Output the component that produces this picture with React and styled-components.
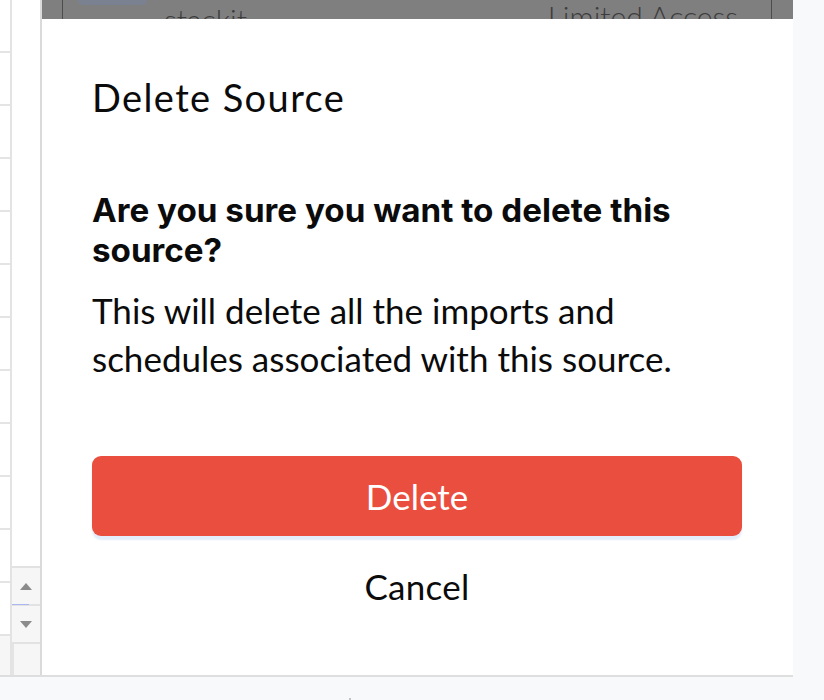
import React from 'react'
import styled, { createGlobalStyle } from 'styled-components'

const Global = createGlobalStyle`
      * {
            box-sizing: border-box;
      }

      body {
            margin: 0;
            background: #f8f9fb;
            font-family: Lato, "Noto Sans", sans-serif;
      }
`

const App = () => {
      const heads = Array.from({ length: 12 })

      return (
            <>
                  <Global />
                  <Page>
                        <Workspace>
                              <Body>
                                    <Sidebar>
                                          <RowHeads>
                                                {heads.map((_, i) => <HeadCell key={i} />)}
                                                <HeadCell $shade $last />
                                          </RowHeads>
                                          <Rail>
                                                <Stepper>
                                                      <StepButton $marked>
                                                            <Arrow dir='up' />
                                                      </StepButton>
                                                      <StepButton>
                                                            <Arrow dir='down' />
                                                      </StepButton>
                                                </Stepper>
                                                <RailTail />
                                          </Rail>
                                    </Sidebar>
                                    <Main>
                                          <Backdrop>
                                                <BehindCard>
                                                      <Chip />
                                                      <BehindName>stackit</BehindName>
                                                      <BehindAccess>Limited Access</BehindAccess>
                                                </BehindCard>
                                          </Backdrop>
                                          <DeleteSheet
                                                title='Delete Source'
                                                question='Are you sure you want to delete this source?'
                                                detail='This will delete all the imports and schedules associated with this source.'
                                          />
                                    </Main>
                              </Body>
                              <Rule />
                              <Footer>
                                    <Dot />
                              </Footer>
                        </Workspace>
                  </Page>
            </>
      )
}

export default App

const DeleteSheet = ({ title, question, detail }) => {

      return (
            <Sheet>
                  <Title>{title}</Title>
                  <Question>{question}</Question>
                  <Detail>{detail}</Detail>
                  <DangerButton>Delete</DangerButton>
                  <GhostButton>Cancel</GhostButton>
            </Sheet>
      )
}

const Arrow = ({ dir }) => (
      <svg width='12' height='7' viewBox='0 0 12 7'>
            {dir === 'up'
                  ? <polygon points='6,0 12,7 0,7' fill='#8b8b8b' />
                  : <polygon points='0,0 12,0 6,7' fill='#8b8b8b' />}
      </svg>
)

const Page = styled.div`
      display: flex;
      width: 824px;
      height: 700px;
      overflow: hidden;
      background: #f8f9fb;
`

const Workspace = styled.div`
      width: 793px;
      display: flex;
      flex-direction: column;
`

const Body = styled.div`
      display: flex;
      height: 675px;
      background: #fff;
`

const Sidebar = styled.div`
      display: flex;
      width: 42px;
      flex-shrink: 0;
`

const RowHeads = styled.div`
      width: 12px;
      display: flex;
      flex-direction: column;
      border-right: 2px solid #e3e3e3;
`

const HeadCell = styled.div`
      height: ${({ $last }) => $last ? 'auto' : '53px'};
      flex: ${({ $last }) => $last ? '1' : '0 0 auto'};
      border-bottom: ${({ $last }) => $last ? 'none' : '2px solid #e4e4e4'};
      background: ${({ $shade }) => $shade ? '#f6f6f6' : '#fff'};
`

const Rail = styled.div`
      width: 30px;
      display: flex;
      flex-direction: column;
      justify-content: flex-end;
      border-right: 2px solid #dadada;
`

const Stepper = styled.div`
      display: flex;
      flex-direction: column;
      border-top: 2px solid #e2e2e2;
`

const StepButton = styled.div`
      position: relative;
      height: 38px;
      display: flex;
      align-items: center;
      justify-content: center;
      background: #f6f6f6;
      border-bottom: 2px solid #e2e2e2;

      &::after {
            content: '';
            display: ${({ $marked }) => $marked ? 'block' : 'none'};
            position: absolute;
            left: 0;
            bottom: -1px;
            width: 17px;
            height: 1px;
            background: #a9b8f3;
      }
`

const RailTail = styled.div`
      height: 31px;
      background: #f6f6f6;
      border-left: 2px solid #e4e4e4;
`

const Main = styled.div`
      flex: 1;
      display: flex;
      flex-direction: column;
`

const Backdrop = styled.div`
      height: 19px;
      overflow: hidden;
      background: #7f7f7f;
      padding: 0 21px 0 20px;
`

const BehindCard = styled.div`
      height: 60px;
      display: flex;
      align-items: flex-start;
      border-left: 1px solid #4c4c4c;
      border-right: 1px solid #4c4c4c;
      padding: 0 33px 0 15px;
      font-family: Lato, sans-serif;
      font-weight: 300;
      font-size: 30px;
      line-height: 30px;
      color: #3c3c3c;
`

const Chip = styled.div`
      width: 69px;
      height: 5px;
      background: #7a8190;
      border-radius: 0 0 6px 6px;
`

const BehindName = styled.span`
      margin: 4px 0 0 17px;
`

const BehindAccess = styled.span`
      margin: 1px 0 0 auto;
`

const Sheet = styled.div`
      flex: 1;
      display: flex;
      flex-direction: column;
      background: #fff;
      padding: 56px 51px 0 50px;
      color: #0b0b0b;
`

const Title = styled.h2`
      margin: 0;
      font-family: Lato, sans-serif;
      font-weight: 400;
      font-size: 38px;
      letter-spacing: 1.4px;
      line-height: 44px;
`

const Question = styled.p`
      margin: 71px 0 0;
      font-family: Inter, "Liberation Sans", sans-serif;
      font-weight: 700;
      font-size: 33.2px;
      line-height: 40px;
`

const Detail = styled.p`
      margin: 16px 0 0;
      font-family: Lato, sans-serif;
      font-size: 35px;
      line-height: 48px;
`

const DangerButton = styled.button`
      margin-top: 74px;
      height: 80px;
      width: 100%;
      border: none;
      border-radius: 9px;
      background: #ea4e3e;
      box-shadow: 0 4px 2px #e4edfb;
      color: #fff;
      font-family: Lato, sans-serif;
      font-size: 35px;
      line-height: 44px;
      cursor: pointer;
`

const GhostButton = styled.button`
      margin-top: 28px;
      align-self: center;
      border: none;
      background: none;
      padding: 0;
      color: #0b0b0b;
      font-family: Lato, sans-serif;
      font-size: 35px;
      letter-spacing: 0.3px;
      line-height: 44px;
      cursor: pointer;
`

const Rule = styled.div`
      height: 2px;
      background: #dedede;
`

const Footer = styled.div`
      flex: 1;
      background: #f8f9fb;
      padding: 21px 0 0 349px;
`

const Dot = styled.div`
      width: 2px;
      height: 2px;
      background: #c4c4c4;
`
